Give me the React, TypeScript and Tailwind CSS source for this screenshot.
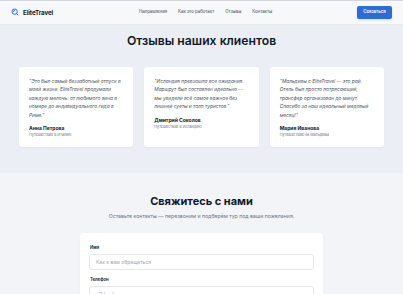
const REVIEWS = [
    {
        text: '"Это был самый беззаботный отпуск в моей жизни. EliteTravel продумали каждую мелочь: от любимого вина в номере до индивидуального гида в Риме."',
        name: 'Анна Петрова',
        trip: 'Путешествие в Италию',
    },
    {
        text: '"Исландия превзошла все ожидания. Маршрут был составлен идеально — мы увидели всё самое важное без лишней суеты и толп туристов."',
        name: 'Дмитрий Соколов',
        trip: 'Путешествие в Исландию',
    },
    {
        text: '"Мальдивы с EliteTravel — это рай. Отель был просто потрясающий, трансфер организован до минут. Спасибо за наш идеальный медовый месяц!"',
        name: 'Мария Иванова',
        trip: 'Путешествие на Мальдивы',
    },
];

const NAV = ['Направления', 'Как это работает', 'Отзывы', 'Контакты'];

function Logo() {
    return (
        <svg width="8" height="8" viewBox="0 0 24 24" fill="none">
            <circle cx="11" cy="11" r="8" stroke="#2f6bd0" strokeWidth="3" />
            <path d="M7 11a4 4 0 0 1 4-4" stroke="#2f6bd0" strokeWidth="2.5" strokeLinecap="round" />
            <path d="M16.5 16.5L21 21" stroke="#2f6bd0" strokeWidth="3" strokeLinecap="round" />
        </svg>
    );
}

export default function App() {
    return (
        <div className="min-h-screen bg-[#f2f4f8] font-['Inter','Liberation_Sans',sans-serif] text-[#111827]">
            {/* шапка */}
            <header className="h-[25px] border-t border-b border-t-[#d4d7dc] border-b-[#e6e9ee] bg-[#f7f8fa] px-[11px] flex items-center">
                <div className="flex items-center gap-[4px] w-[128px]">
                    <Logo />
                    <span className="text-[6.2px] font-bold tracking-[-0.1px]">EliteTravel</span>
                </div>
                <nav className="flex items-center gap-[11px] text-[4.3px] text-[#374151]">
                    {NAV.map((n) => (
                        <span key={n}>{n}</span>
                    ))}
                </nav>
                <button className="ml-auto h-[13px] w-[35px] rounded-[2px] bg-[#2f6bd0] text-white text-[4.3px] font-semibold shadow-sm">
                    Связаться
                </button>
            </header>

            {/* отзывы */}
            <section className="bg-[#ebeef5] pt-[8px] pb-[26px]">
                <h2 className="text-center text-[12.2px] leading-[16px] font-semibold">Отзывы наших клиентов</h2>
                <div className="mt-[18px] mx-auto w-[365px] grid grid-cols-3 gap-[11px]">
                    {REVIEWS.map((r) => (
                        <div key={r.name} className="bg-white rounded-[3px] shadow-[0_1px_2px_rgba(0,0,0,0.04)] px-[10px] pt-[10px] pb-[9px] flex flex-col">
                            <p className="italic text-[4.8px] leading-[8.4px] text-[#4b5563]">{r.text}</p>
                            <div className="mt-[6px] text-[5px] leading-[7px] font-bold text-[#111827]">{r.name}</div>
                            <div className="text-[3.7px] leading-[6px] text-[#6b7280]">{r.trip}</div>
                        </div>
                    ))}
                </div>
            </section>

            {/* контакты */}
            <section className="pt-[21px] pb-[20px]">
                <h2 className="text-center text-[11px] leading-[14px] font-bold">Свяжитесь с нами</h2>
                <p className="mt-[4px] text-center text-[5.2px] leading-[8px] text-[#6b7280]">
                    Оставьте контакты — перезвоним и подберём тур под ваши пожелания.
                </p>
                <form className="mt-[13px] mx-auto w-[243px] bg-white rounded-[4px] shadow-[0_1px_2px_rgba(0,0,0,0.04)] px-[9px] pt-[12px] pb-[10px]">
                    <label className="block text-[4.3px] leading-[5px] font-semibold ml-[1px]">Имя</label>
                    <input
                        placeholder="Как к вам обращаться"
                        className="mt-[4px] block w-full h-[16px] border border-[#e5e7eb] rounded-[3px] px-[6px] text-[5px] placeholder:text-[#a0a6b0] outline-none"
                    />
                    <label className="block mt-[7px] text-[4.3px] leading-[5px] font-semibold ml-[1px]">Телефон</label>
                    <input
                        placeholder="+7 (___) ___-__-__"
                        className="mt-[4px] block w-full h-[16px] border border-[#e5e7eb] rounded-[3px] px-[6px] text-[5px] placeholder:text-[#a0a6b0] outline-none"
                    />
                </form>
            </section>
        </div>
    );
}
